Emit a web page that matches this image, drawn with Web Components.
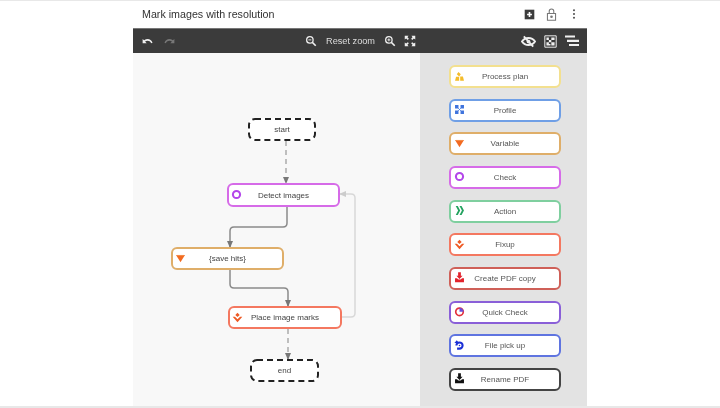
<!DOCTYPE html>
<html>
<head>
<meta charset="utf-8">
<title>Mark images with resolution</title>
<style>
	html, body { margin: 0; height: 100%; background: #fff; }
	body { font-family: "Liberation Sans", Arial, sans-serif; color: #333; overflow: hidden; }
</style>
</head>
<body>

<flow-app>
	<flow-header slot="header">Mark images with resolution</flow-header>
	<flow-toolbar slot="toolbar"></flow-toolbar>

	<flow-canvas slot="canvas">
		<flow-node kind="terminal" x="115" y="65" w="68" h="23">start</flow-node>
		<flow-node color="#d66be8" icon="check" x="94" y="130" w="113" h="24">Detect images</flow-node>
		<flow-node color="#dfae69" icon="variable" x="38" y="194" w="113" h="23">{save hits}</flow-node>
		<flow-node color="#f47860" icon="fixup" x="95" y="253" w="114" h="23">Place image marks</flow-node>
		<flow-node kind="terminal" x="117" y="306" w="69" h="23">end</flow-node>
	</flow-canvas>

	<flow-palette slot="palette">
		<palette-item color="#f3e08f" icon="plan">Process plan</palette-item>
		<palette-item color="#6f9fe6" icon="profile">Profile</palette-item>
		<palette-item color="#dfae69" icon="variable">Variable</palette-item>
		<palette-item color="#d66be8" icon="check">Check</palette-item>
		<palette-item color="#7fcf9f" icon="action">Action</palette-item>
		<palette-item color="#f47860" icon="fixup">Fixup</palette-item>
		<palette-item color="#cf6058" icon="copy">Create PDF copy</palette-item>
		<palette-item color="#8a5fd8" icon="quick">Quick Check</palette-item>
		<palette-item color="#5f74e0" icon="pickup">File pick up</palette-item>
		<palette-item color="#444" icon="rename">Rename PDF</palette-item>
	</flow-palette>
</flow-app>

<script>
// all icons are drawn on a 16x16 box
const ICONS = {
	undo: `<path d="M2 5v5h5L5 8c2.600-1.800 6-1 7.500 2l1.700-.6C12.300 5 8 3.600 3.800 6.600z" fill="currentColor"/>`,
	redo: `<path d="M14 5v5H9l2-2C8.400 6.200 5 7 3.500 10l-1.700-.6C3.700 5 8 3.600 12.200 6.600z" fill="currentColor"/>`,
	zoomOut: `<circle cx="6.500" cy="6.500" r="4.300" fill="none" stroke="currentColor" stroke-width="1.700"/><path d="M10 10l4.300 4.300" stroke="currentColor" stroke-width="2.200"/><path d="M4.500 6.500h4" stroke="currentColor" stroke-width="1.200"/>`,
	zoomIn: `<circle cx="6.500" cy="6.500" r="4.300" fill="none" stroke="currentColor" stroke-width="1.700"/><path d="M10 10l4.300 4.300" stroke="currentColor" stroke-width="2.200"/><path d="M4.500 6.500h4M6.500 4.500v4" stroke="currentColor" stroke-width="1.200"/>`,
	fit: `<path d="M1 1h5L4.600 2.900 6.500 5 5 6.500 2.900 4.600 1 6zM15 1v5l-1.900-1.400L11 6.500 9.500 5l1.900-2.100L10 1zM1 15v-5l1.900 1.400L5 9.500 6.500 11l-1.900 2.100L6 15zM15 15h-5l1.400-1.900L9.500 11 11 9.500l2.100 1.900L15 10z" fill="currentColor"/>`,
	eyeOff: `<path d="M1 8c3.400-5 10.600-5 14 0-3.400 5-10.600 5-14 0z" fill="none" stroke="currentColor" stroke-width="2"/><circle cx="8" cy="8" r="2" fill="currentColor"/><path d="M3 2.500l10 11" stroke="currentColor" stroke-width="2"/>`,
	grid: `<path d="M1 1h14v14H1z" fill="none" stroke="currentColor" stroke-width="1.200"/><path d="M3 3h3v3H3zM6 6h3v3H6zM9 3h4v3H9zM3 9h3v4H3zM9 9h4v4H9zM6 11h2v2H6z" fill="currentColor"/>`,
	lines: `<path d="M1 3.500h10M3 7.800h12M5 12h10" stroke="currentColor" stroke-width="2.200"/>`,
	addBox: `<path d="M1 1h14v14H1z" fill="currentColor"/><path d="M8 4.500v7M4.500 8h7" stroke="#fff" stroke-width="2.400"/>`,
	lock: `<path d="M5.200 7V4a2.800 2.800 0 0 1 5.600 0v3" fill="none" stroke="currentColor" stroke-width="1.300"/><path d="M3 6.800h10v8.200H3z" fill="none" stroke="currentColor" stroke-width="1.300"/><circle cx="8" cy="10.800" r="1.600" fill="currentColor"/>`,
	more: `<circle cx="8" cy="3" r="1.400" fill="currentColor"/><circle cx="8" cy="8" r="1.400" fill="currentColor"/><circle cx="8" cy="13" r="1.400" fill="currentColor"/>`,
	plan: `<path d="M6.500 1.500l3.400 3.400-2.400 3-3.400-3zM3 8.500h4.500v5.500H1.500zM9 8h4L14.500 14H9z" fill="#f4bc2a"/>`,
	profile: `<path d="M1.500 1.500h5v5h-5zM9.500 1.500h5v5h-5zM1.500 9.500h5v5h-5zM9.500 9.500h5v5h-5z" fill="#3f74dd"/><path d="M5 5l6 6M11 5l-6 6" stroke="#3f74dd" stroke-width="1"/>`,
	variable: `<path d="M1.500 3h13L8 13.500z" fill="#f26a21"/><path d="M3 3.500h10" stroke="#f8a060" stroke-width="1"/>`,
	check: `<circle cx="8" cy="8" r="5.200" fill="none" stroke="#b347ea" stroke-width="3"/>`,
	action: `<path d="M2.500 1.500h3L9 8l-3.500 6.500h-3L6 8zM8 1.500h3L14.500 8 11 14.500H8L11.500 8z" fill="#23a25f"/>`,
	fixup: `<path d="M8 1l3.200 3.200L8 7.400 4.800 4.200zM1 7l3.300 0L8 10.500 11.700 7 15 7l-7 8z" fill="#ee5a24"/>`,
	copy: `<path d="M6 .5h4v5h2.500L8 10 3.500 5.500H6z" fill="#e3232c"/><path d="M1.500 9l3 0c.8 2.500 6.200 2.500 7 0l3 0V15h-13z" fill="#e3232c"/>`,
	quick: `<circle cx="8" cy="8.500" r="5.500" fill="none" stroke="#e3303c" stroke-width="2.400"/><path d="M8 2.500v6h6A6 6 0 0 0 8 2.500z" fill="#6a4fd8"/>`,
	pickup: `<path d="M3.500 8a4.500 4.500 0 1 1 4.500 4.500H4.500" fill="none" stroke="#1a2fd6" stroke-width="3"/><path d="M.5 4.500h7L4 .5z" fill="#1a2fd6"/><circle cx="8" cy="8" r="1.200" fill="#1a2fd6"/>`,
	rename: `<path d="M6 .5h4v5h2.500L8 10 3.500 5.500H6z" fill="#111"/><path d="M1.500 9l3 0c.8 2.500 6.200 2.500 7 0l3 0V15h-13z" fill="#111"/>`
};

function svgIcon(name, size) {
	return `<svg width="${size}" height="${size}" viewBox="0 0 16 16" style="display:block;flex:none">${ICONS[name]}</svg>`;
}

class FlowApp extends HTMLElement {
	constructor() {
		super();
		this.attachShadow({mode: "open"}).innerHTML = `
			<style>
				:host { display: flex; justify-content: center; height: 408px; box-sizing: border-box; padding-top: 1px; background: #fff; border-top: 1px solid #e8e8e8; border-bottom: 2px solid #e8e8e8; filter: blur(.5px); }
				.panel { width: 454px; display: flex; flex-direction: column; }
				.work { flex: 1; display: flex; min-height: 0; }
			</style>
			<div class="panel">
				<slot name="header"></slot>
				<slot name="toolbar"></slot>
				<div class="work">
					<slot name="canvas"></slot>
					<slot name="palette"></slot>
				</div>
			</div>`;
	}
}

class FlowHeader extends HTMLElement {
	constructor() {
		super();
		this.attachShadow({mode: "open"}).innerHTML = `
			<style>
				:host { display: flex; align-items: center; height: 26px; box-sizing: border-box; padding: 0 7px 2px 9px; font-size: 10.700px; color: #333; }
				.title { flex: 1; }
				.actions { display: flex; align-items: center; gap: 10px; color: #555; }
				.actions .lock { color: #777; }
			</style>
			<div class="title"><slot></slot></div>
			<div class="actions">
				<span style="color:#3c3c3c">${svgIcon("addBox", 11)}</span>
				<span class="lock">${svgIcon("lock", 13)}</span>
				<span>${svgIcon("more", 12)}</span>
			</div>`;
	}
}

class FlowToolbar extends HTMLElement {
	constructor() {
		super();
		this.attachShadow({mode: "open"}).innerHTML = `
			<style>
				:host { display: flex; align-items: center; height: 25px; padding: 0 7px 0 8px; background: #3b3b3b; color: #f0f0f0; font-size: 9.200px; border-top: 1px solid #777; box-sizing: border-box; }
				.group { display: flex; align-items: center; }
				.history { gap: 9px; width: 164px; }
				.history .off { color: #777; }
				.zoom { gap: 8px; }
				.view { gap: 7.500px; margin-left: auto; }
				.label { color: #ddd; margin: 0 1px; }
			</style>
			<div class="group history">
				<span>${svgIcon("undo", 13)}</span>
				<span class="off">${svgIcon("redo", 13)}</span>
			</div>
			<div class="group zoom">
				${svgIcon("zoomOut", 12)}
				<span class="label">Reset zoom</span>
				${svgIcon("zoomIn", 12)}
				${svgIcon("fit", 12)}
			</div>
			<div class="group view">
				${svgIcon("eyeOff", 15)}
				${svgIcon("grid", 13)}
				${svgIcon("lines", 16)}
			</div>`;
	}
}

class FlowCanvas extends HTMLElement {
	constructor() {
		super();
		this.attachShadow({mode: "open"}).innerHTML = `
			<style>
				:host { display: block; position: relative; width: 287px; background: #f8f8f8; }
				svg { position: absolute; left: 0; top: 0; }
			</style>
			<svg width="287" height="352" fill="none">
				<defs>
					<marker id="arr" markerWidth="7" markerHeight="6" refX="6" refY="3" orient="auto" markerUnits="userSpaceOnUse"><path d="M0 0l7 3-7 3z" fill="#777"/></marker>
					<marker id="arrl" markerWidth="7" markerHeight="6" refX="6" refY="3" orient="auto" markerUnits="userSpaceOnUse"><path d="M0 0l7 3-7 3z" fill="#ccc"/></marker>
				</defs>
				<g stroke-width="1.500">
					<path d="M153 88v42" stroke="#aaa" stroke-dasharray="5 4" marker-end="url(#arr)"/>
					<path d="M155 276v30" stroke="#aaa" stroke-dasharray="5 4" marker-end="url(#arr)"/>
					<path d="M154 154v16q0 4-4 4H101q-4 0-4 4v16" stroke="#8a8a8a" marker-end="url(#arr)"/>
					<path d="M97 217v14q0 4 4 4H151q4 0 4 4v14" stroke="#8a8a8a" marker-end="url(#arr)"/>
					<path d="M209 264h9q4 0 4-4V145q0-4-4-4h-11" stroke="#d8d8d8" marker-end="url(#arrl)"/>
				</g>
			</svg>
			<slot></slot>`;
	}
}

class FlowNode extends HTMLElement {
	constructor() {
		super();
		this.attachShadow({mode: "open"});
	}
	connectedCallback() {
		const terminal = this.getAttribute("kind") == "terminal";
		const color = this.getAttribute("color");
		const icon = this.getAttribute("icon");
		const w = this.getAttribute("w"), h = this.getAttribute("h");
		this.shadowRoot.innerHTML = `
			<style>
				:host { position: absolute; left: ${this.getAttribute("x")}px; top: ${this.getAttribute("y")}px; width: ${w}px; height: ${h}px; box-sizing: border-box; display: flex; align-items: center; background: #fff; border-radius: 6px; ${terminal ? "" : `border: 2px solid ${color};`} font-size: 8px; color: #444; }
				.icon { width: 16px; padding: 0 0 1px 2px; box-sizing: border-box; }
				.text { flex: 1; text-align: center; padding-right: ${icon ? 16 : 0}px; white-space: nowrap; }
				svg.dash { position: absolute; left: 0; top: 0; }
			</style>
			${terminal ? `<svg class="dash" width="${w}" height="${h}" fill="none"><rect x="1" y="1" width="${w - 2}" height="${h - 2}" rx="6" stroke="#222" stroke-width="2" stroke-dasharray="6 4"/></svg>` : ""}
			${icon ? `<span class="icon">${svgIcon(icon, 11)}</span>` : ""}
			<span class="text"><slot></slot></span>`;
	}
}

class FlowPalette extends HTMLElement {
	constructor() {
		super();
		this.attachShadow({mode: "open"}).innerHTML = `
			<style>
				:host { display: flex; flex-direction: column; gap: 10.670px; width: 167px; box-sizing: border-box; padding: 12px 26px 0 29px; background: #e3e3e3; }
			</style>
			<slot></slot>`;
	}
}

class PaletteItem extends HTMLElement {
	constructor() {
		super();
		this.attachShadow({mode: "open"});
	}
	connectedCallback() {
		this.shadowRoot.innerHTML = `
			<style>
				:host { display: flex; align-items: center; height: 23px; box-sizing: border-box; background: #fff; border: 2px solid ${this.getAttribute("color")}; border-radius: 6px; font-size: 8px; color: #555; }
				.icon { width: 16px; padding: 0 0 1px 3px; box-sizing: border-box; }
				.text { flex: 1; text-align: center; padding-right: 16px; white-space: nowrap; }
			</style>
			<span class="icon">${svgIcon(this.getAttribute("icon"), 11)}</span>
			<span class="text"><slot></slot></span>`;
	}
}

customElements.define("flow-app", FlowApp);
customElements.define("flow-header", FlowHeader);
customElements.define("flow-toolbar", FlowToolbar);
customElements.define("flow-canvas", FlowCanvas);
customElements.define("flow-node", FlowNode);
customElements.define("flow-palette", FlowPalette);
customElements.define("palette-item", PaletteItem);
</script>
</body>
</html>
